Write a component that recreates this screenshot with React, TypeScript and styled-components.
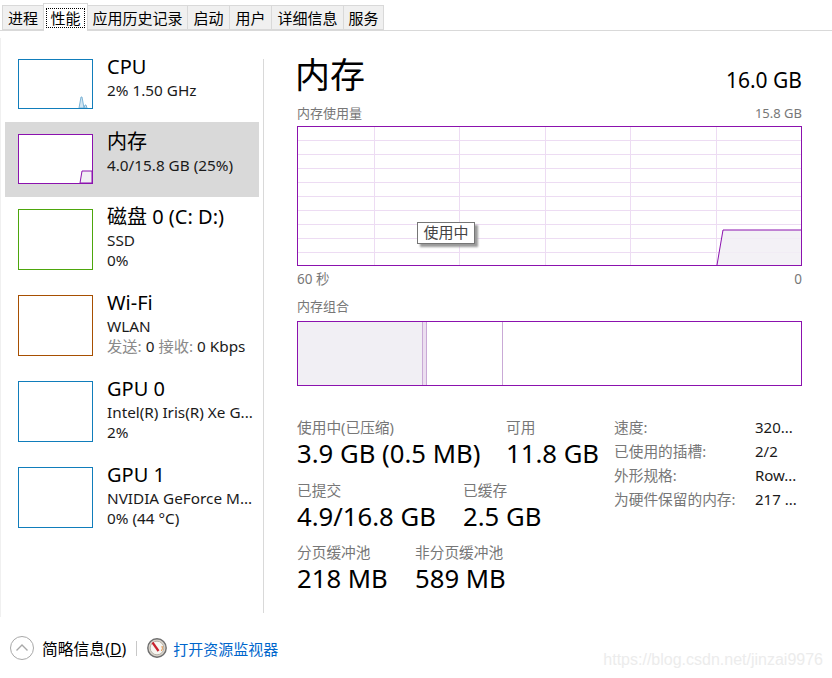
import { createGlobalStyle, styled } from "styled-components";

const PURPLE = "#8b12ae";

const GlobalStyle = createGlobalStyle`
  html, body {
    margin: 0;
    padding: 0;
    background: #fff;
    font-family: "Noto Sans", "Noto Sans CJK SC", sans-serif;
    color: #000;
  }
  * { box-sizing: border-box; }
`;

const tabs = ["进程", "性能", "应用历史记录", "启动", "用户", "详细信息", "服务"];
const tabWidths = [42, 45, 101, 43, 43, 73, 41];

const sideItems = [
  { title: "CPU", lines: ["2%  1.50 GHz"], color: "#117dbb", tall: false, kind: "cpu" },
  { title: "内存", lines: ["4.0/15.8 GB (25%)"], color: PURPLE, tall: false, kind: "mem" },
  { title: "磁盘 0 (C: D:)", lines: ["SSD", "0%"], color: "#4da60c", tall: true, kind: "" },
  { title: "Wi-Fi", lines: ["WLAN"], net: true, color: "#a74f01", tall: true, kind: "" },
  { title: "GPU 0", lines: ["Intel(R) Iris(R) Xe G...", "2%"], color: "#117dbb", tall: true, kind: "" },
  { title: "GPU 1", lines: ["NVIDIA GeForce M...", "0%  (44 °C)"], color: "#117dbb", tall: true, kind: "" },
];

const specs = [
  ["速度:", "320..."],
  ["已使用的插槽:", "2/2"],
  ["外形规格:", "Row..."],
  ["为硬件保留的内存:", "217 ..."],
];

export default function App() {
  return (
    <>
      <GlobalStyle />
      <Page>
        <TabBar>
          {tabs.map((t, i) => (
            <Tab key={t} $active={i === 1} $w={tabWidths[i]}>
              <TabLabel $active={i === 1}>{t}</TabLabel>
            </Tab>
          ))}
        </TabBar>
        <Body>
          <Sidebar>
            {sideItems.map((item) => (
              <SideItem key={item.title} $selected={item.kind === "mem"}>
                <Thumb $color={item.color} $tall={item.tall}>
                  {item.kind === "cpu" && (
                    <ThumbSvg viewBox="0 0 73 48" preserveAspectRatio="none">
                      <path d="M60 48 L62 37 L63 37 L65 48 L66 45 L67 45 L68 48 Z" fill="#d3e6f2" stroke="#7db4d6" strokeWidth="1" />
                    </ThumbSvg>
                  )}
                  {item.kind === "mem" && (
                    <ThumbSvg viewBox="0 0 73 48" preserveAspectRatio="none">
                      <path d="M61 48 L63 36 L73 36 L73 48 Z" fill="#f1eff4" stroke={PURPLE} strokeWidth="1" />
                    </ThumbSvg>
                  )}
                </Thumb>
                <SideText>
                  <SideTitle>{item.title}</SideTitle>
                  {item.lines.map((l) => (
                    <SideLine key={l}>{l}</SideLine>
                  ))}
                  {item.net && (
                    <SideLine>
                      <Muted>发送:</Muted> 0 <Muted>接收:</Muted> 0 Kbps
                    </SideLine>
                  )}
                </SideText>
              </SideItem>
            ))}
          </Sidebar>
          <Divider />
          <Detail>
            <Header>
              <Heading>内存</Heading>
              <Capacity>16.0 GB</Capacity>
            </Header>
            <CaptionRow>
              <span>内存使用量</span>
              <span>15.8 GB</span>
            </CaptionRow>
            <UsageGraph>
              <GraphSvg viewBox="0 0 503 138" preserveAspectRatio="none">
                <path d="M419 138 L425 103 L503 103 L503 138 Z" fill="#f1eff4" fillOpacity="0.85" />
                <path d="M419 138 L425 103 L503 103" fill="none" stroke={PURPLE} strokeWidth="1" />
              </GraphSvg>
              <GraphTip>使用中</GraphTip>
            </UsageGraph>
            <AxisRow>
              <span>60 秒</span>
              <span>0</span>
            </AxisRow>
            <CompCaption>内存组合</CompCaption>
            <CompBar>
              <CompSegment $w={125} $bg="#f1eff4" />
              <CompSegment $w={4} $bg="#ecdff0" />
              <CompSegment $w={76} $bg="#fff" />
              <CompSegment $w={298} $bg="#fff" $plain />
            </CompBar>
            <Stats>
              <StatColumns>
                <StatRow>
                  <Stat $w={209}>
                    <StatLabel>使用中(已压缩)</StatLabel>
                    <StatValue>3.9 GB (0.5 MB)</StatValue>
                  </Stat>
                  <Stat>
                    <StatLabel>可用</StatLabel>
                    <StatValue>11.8 GB</StatValue>
                  </Stat>
                </StatRow>
                <StatRow>
                  <Stat $w={166}>
                    <StatLabel>已提交</StatLabel>
                    <StatValue>4.9/16.8 GB</StatValue>
                  </Stat>
                  <Stat>
                    <StatLabel>已缓存</StatLabel>
                    <StatValue>2.5 GB</StatValue>
                  </Stat>
                </StatRow>
                <StatRow>
                  <Stat $w={118}>
                    <StatLabel>分页缓冲池</StatLabel>
                    <StatValue>218 MB</StatValue>
                  </Stat>
                  <Stat>
                    <StatLabel>非分页缓冲池</StatLabel>
                    <StatValue>589 MB</StatValue>
                  </Stat>
                </StatRow>
              </StatColumns>
              <SpecGrid>
                {specs.map(([k, v]) => (
                  <SpecRow key={k}>
                    <SpecKey>{k}</SpecKey>
                    <SpecValue>{v}</SpecValue>
                  </SpecRow>
                ))}
              </SpecGrid>
            </Stats>
          </Detail>
        </Body>
        <Footer>
          <CircleButton>
            <svg width="24" height="24" viewBox="0 0 24 24" fill="none">
              <circle cx="12" cy="12" r="11.5" stroke="#a8a8a8" />
              <path d="M6.5 14.5 L12 9 L17.5 14.5" stroke="#a8a8a8" strokeWidth="1.4" />
            </svg>
          </CircleButton>
          <FooterText>
            简略信息(<u>D</u>)
          </FooterText>
          <FooterSep />
          <svg width="20" height="20" viewBox="0 0 20 20">
            <circle cx="10" cy="10" r="9.2" fill="#d9d4cc" stroke="#6e6e6e" strokeWidth="1.4" />
            <circle cx="10" cy="10" r="6.8" fill="#f7f5f0" stroke="#a9a49b" strokeWidth="0.8" />
            <path d="M5.5 4.5 L11.5 13" stroke="#c8202c" strokeWidth="2.2" />
            <path d="M15 8 A5.5 5.5 0 0 1 14.5 13" stroke="#e08a3c" strokeWidth="1" fill="none" />
          </svg>
          <FooterLink>打开资源监视器</FooterLink>
          <Watermark>https://blog.csdn.net/jinzai9976</Watermark>
        </Footer>
      </Page>
    </>
  );
}

const Page = styled.div`
  position: relative;
  width: 832px;
  height: 678px;
  overflow: hidden;
  background: #fff;
`;

const TabBar = styled.div`
  display: flex;
  align-items: flex-end;
  height: 31px;
  padding-left: 2px;
  border-bottom: 1px solid #d9d9d9;
`;

const Tab = styled.div<{ $active: boolean; $w: number }>`
  display: flex;
  align-items: ${(p) => (p.$active ? "flex-end" : "center")};
  justify-content: center;
  width: ${(p) => p.$w}px;
  height: ${(p) => (p.$active ? 28 : 25)}px;
  margin-bottom: ${(p) => (p.$active ? -1 : 0)}px;
  padding-bottom: ${(p) => (p.$active ? 3 : 0)}px;
  background: ${(p) => (p.$active ? "#fff" : "#f0f0f0")};
  border: 1px solid #d9d9d9;
  border-bottom: ${(p) => (p.$active ? "none" : "1px solid #d9d9d9")};
  margin-right: -1px;
  position: relative;
  z-index: ${(p) => (p.$active ? 1 : 0)};
  font-size: 15px;
  line-height: 18px;
`;

const TabLabel = styled.span<{ $active: boolean }>`
  padding: 0 ${(p) => (p.$active ? 3 : 1)}px;
  border: ${(p) => (p.$active ? "1px dotted #000" : "none")};
  line-height: ${(p) => (p.$active ? 18 : 22)}px;
  white-space: nowrap;
`;

const Body = styled.div`
  display: flex;
  align-items: flex-start;
  height: 579px;
  margin-top: 7px;
  border-left: 1px solid #f0f0f0;
`;

const Sidebar = styled.div`
  display: flex;
  flex-direction: column;
  flex: none;
  width: 258px;
  padding: 9px 0 0 4px;
`;

const SideItem = styled.div<{ $selected: boolean }>`
  display: flex;
  gap: 14px;
  padding: 12px 0 13px 13px;
  background: ${(p) => (p.$selected ? "#d9d9d9" : "transparent")};
`;

const Thumb = styled.div<{ $color: string; $tall: boolean }>`
  position: relative;
  flex: none;
  width: 75px;
  height: ${(p) => (p.$tall ? 61 : 50)}px;
  background: #fff;
  border: 1px solid ${(p) => p.$color};
`;

const ThumbSvg = styled.svg`
  display: block;
  width: 100%;
  height: 100%;
`;

const SideText = styled.div`
  display: flex;
  flex-direction: column;
  margin-top: -5px;
  white-space: nowrap;
`;

const SideTitle = styled.div`
  font-size: 20px;
  line-height: 26px;
`;

const SideLine = styled.div`
  font-size: 15.3px;
  line-height: 20px;
  color: #1a1a1a;
`;

const Muted = styled.span`
  color: #8a8a8a;
`;

const Divider = styled.div`
  flex: none;
  width: 1px;
  height: 554px;
  margin: 21px 0 0 4px;
  background: #d9d9d9;
`;

const Detail = styled.div`
  display: flex;
  flex-direction: column;
  flex: none;
  width: 505px;
  margin-left: 33px;
  padding-top: 15px;
`;

const Header = styled.div`
  display: flex;
  align-items: flex-end;
  justify-content: space-between;
  height: 44px;
`;

const Heading = styled.div`
  margin-left: -2px;
  font-size: 35px;
  line-height: 44px;
`;

const Capacity = styled.div`
  font-size: 21px;
  line-height: 28px;
  margin-bottom: 3px;
`;

const CaptionRow = styled.div`
  display: flex;
  justify-content: space-between;
  height: 22px;
  margin-top: 7px;
  font-size: 13px;
  line-height: 18px;
  color: #777;
`;

const UsageGraph = styled.div`
  position: relative;
  height: 140px;
  border: 1px solid ${PURPLE};
  background-color: #fff;
  background-image:
    repeating-linear-gradient(to bottom, transparent 0, transparent 13px, #eddcf3 13px, #eddcf3 14px),
    repeating-linear-gradient(to right, transparent 0, transparent 76px, #eddcf3 76px, #eddcf3 77px, transparent 77px, transparent 85.4px);
`;

const GraphSvg = styled.svg`
  position: absolute;
  inset: 0;
  width: 100%;
  height: 100%;
`;

const GraphTip = styled.div`
  position: absolute;
  left: 119px;
  top: 95px;
  width: 58px;
  height: 22px;
  background: #fff;
  border: 1px solid #767676;
  box-shadow: 3px 3px 2px #9a9a9a;
  font-size: 15px;
  line-height: 19px;
  text-align: center;
  color: #444;
`;

const AxisRow = styled.div`
  display: flex;
  justify-content: space-between;
  margin-top: 4px;
  font-size: 13.5px;
  line-height: 18px;
  color: #777;
`;

const CompCaption = styled.div`
  margin-top: 9px;
  font-size: 13px;
  line-height: 18px;
  color: #777;
`;

const CompBar = styled.div`
  display: flex;
  height: 65px;
  margin-top: 6px;
  border: 1px solid ${PURPLE};
`;

const CompSegment = styled.div<{ $w: number; $bg: string; $plain?: boolean }>`
  flex: none;
  width: ${(p) => p.$w}px;
  background: ${(p) => p.$bg};
  border-right: ${(p) => (p.$plain ? "none" : "1px solid #c9a9d6")};
`;

const Stats = styled.div`
  display: flex;
  margin-top: 32px;
`;

const StatColumns = styled.div`
  display: flex;
  flex-direction: column;
  gap: 10.5px;
  width: 317px;
`;

const StatRow = styled.div`
  display: flex;
`;

const Stat = styled.div<{ $w?: number }>`
  flex: none;
  width: ${(p) => (p.$w ? `${p.$w}px` : "auto")};
  white-space: nowrap;
`;

const StatLabel = styled.div`
  font-size: 14.7px;
  line-height: 18px;
  color: #777;
`;

const StatValue = styled.div`
  margin-top: 2px;
  font-size: 25.7px;
  line-height: 32px;
`;

const SpecGrid = styled.div`
  display: flex;
  flex-direction: column;
`;

const SpecRow = styled.div`
  display: flex;
  height: 24.1px;
  font-size: 14.7px;
  line-height: 19px;
`;

const SpecKey = styled.div`
  width: 141px;
  color: #777;
  white-space: nowrap;
`;

const SpecValue = styled.div`
  font-size: 15px;
  color: #1a1a1a;
  white-space: nowrap;
`;

const Footer = styled.div`
  display: flex;
  align-items: center;
  height: 24px;
  margin-top: 19px;
  padding-left: 10px;
`;

const CircleButton = styled.div`
  display: flex;
  flex: none;
  width: 24px;
  height: 24px;
`;

const FooterText = styled.div`
  margin-left: 8px;
  font-size: 15.8px;
  white-space: nowrap;
`;

const FooterSep = styled.div`
  flex: none;
  width: 1px;
  height: 15px;
  margin: 0 10px 0 10px;
  background: #c8c8c8;
`;

const FooterLink = styled.div`
  margin-left: 6px;
  font-size: 15px;
  color: #0066cc;
  white-space: nowrap;
`;

const Watermark = styled.div`
  position: absolute;
  right: 9px;
  bottom: 9px;
  font-family: "Liberation Sans", sans-serif;
  font-size: 16px;
  line-height: 18px;
  color: #ececec;
`;
